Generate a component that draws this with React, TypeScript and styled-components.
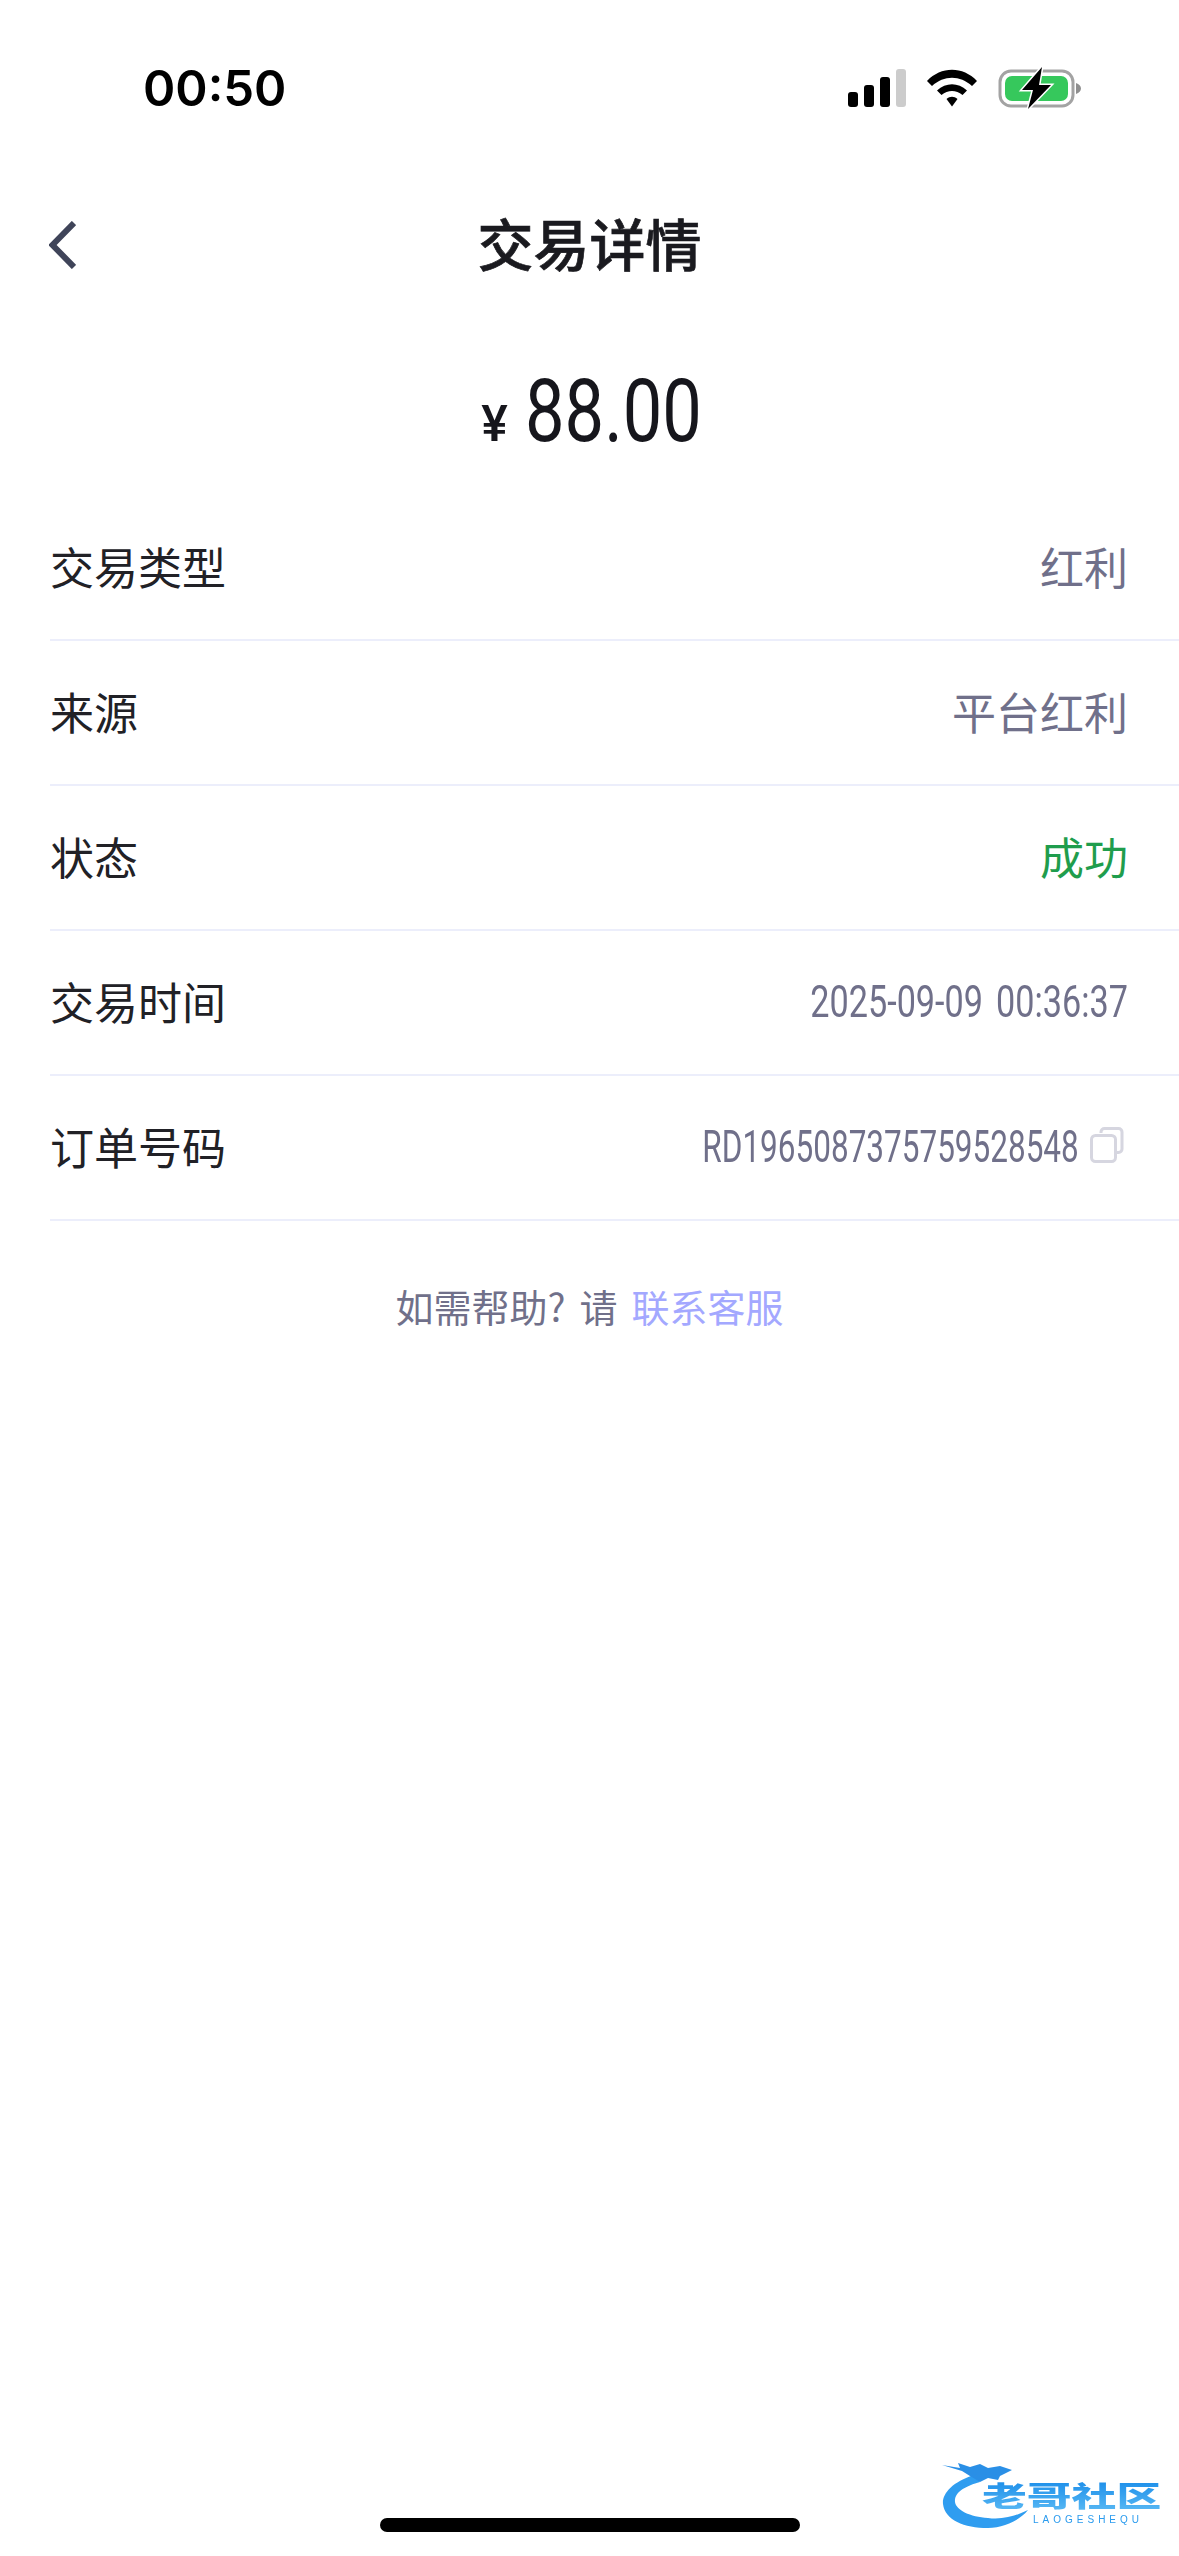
import styled, { createGlobalStyle } from "styled-components";

const CJK = `"Noto Sans CJK SC", "Noto Sans", sans-serif`;
const DIGITS = `"Roboto", "Liberation Sans", sans-serif`;

type Row = {
  label: string;
  value: string;
  tone?: string;
  // horizontal squeeze for the DIN-style digit strings
  squeeze?: number;
  wordGap?: number;
  copy?: boolean;
};

const rows: Row[] = [
  { label: "交易类型", value: "红利" },
  { label: "来源", value: "平台红利" },
  { label: "状态", value: "成功", tone: "success" },
  { label: "交易时间", value: "2025-09-09 00:36:37", squeeze: 0.76, wordGap: 6 },
  { label: "订单号码", value: "RD1965087375759528548", squeeze: 0.7, copy: true },
];

function App() {
  return (
    <Page>
      <GlobalStyle />
      <StatusBar>
        <Clock>00:50</Clock>
        <StatusIcons>
          <IconSlot width="58" height="38" viewBox="0 0 58 38">
            <rect x="0" y="23" width="10" height="15" rx="3" fill="#000" />
            <rect x="16" y="16" width="10" height="22" rx="3" fill="#000" />
            <rect x="32" y="8" width="10" height="30" rx="3" fill="#000" />
            <rect x="48" y="0" width="10" height="38" rx="3" fill="#ccc" />
          </IconSlot>
          <IconSlot width="52" height="38" viewBox="0 0 52 38">
            <path d="M1 12 C15 -3 37 -3 51 12 L46 17 C34 6 18 6 6 17 Z" fill="#000" />
            <path d="M11 21.5 C20 13 32 13 41 21.5 L36.5 26 C30 20.5 22 20.5 15.5 26 Z" fill="#000" />
            <path d="M20.5 30 C24 27 28 27 31.5 30 L26 37.5 Z" fill="#000" />
          </IconSlot>
          <IconSlot width="84" height="42" viewBox="0 0 84 42">
            <rect x="2" y="4" width="73" height="35" rx="11" fill="none" stroke="#a3a3a3" strokeWidth="3" />
            <rect x="7" y="9" width="63" height="25" rx="7" fill="#36c85c" />
            <path d="M78 16 C81 17 83 19 83 21.5 C83 24 81 26 78 27 Z" fill="#8f8f8f" />
            <path d="M44 0 L24 23 H35 L30 42 L53 18 H41 Z" fill="#000" stroke="#fff" strokeWidth="3" paintOrder="stroke" />
          </IconSlot>
        </StatusIcons>
      </StatusBar>

      <NavBar>
        <BackIcon width="27" height="48" viewBox="0 0 27 48">
          <path d="M25 2 L3.5 24 L25 46" fill="none" stroke="#3f4459" strokeWidth="6" />
        </BackIcon>
        <Title>交易详情</Title>
      </NavBar>

      <Amount>
        <Currency>¥</Currency>
        <AmountValue>88.00</AmountValue>
      </Amount>

      <DetailList>
        {rows.map((row) => (
          <DetailRow key={row.label}>
            <Label>{row.label}</Label>
            <ValueGroup>
              <Value $tone={row.tone} $squeeze={row.squeeze} $wordGap={row.wordGap}>
                {row.value}
              </Value>
              {row.copy && (
                <CopyIcon width="34" height="36" viewBox="0 0 34 36">
                  <path
                    d="M11 6 V5 C11 3 12.5 1.5 14.5 1.5 H28.5 C30.5 1.5 32 3 32 5 V22 C32 24 30.5 25.5 28.5 25.5 H27"
                    fill="none"
                    stroke="#d6d6e0"
                    strokeWidth="3"
                  />
                  <rect x="1.5" y="8.5" width="24" height="26" rx="4" fill="none" stroke="#d6d6e0" strokeWidth="3" />
                </CopyIcon>
              )}
            </ValueGroup>
          </DetailRow>
        ))}
      </DetailList>

      <HelpLine>
        如需帮助? 请 <HelpLink>联系客服</HelpLink>
      </HelpLine>

      <HomeIndicator />

      <Watermark>
        <svg width="100" height="72" viewBox="0 0 100 72">
          <path
            d="M34 15 C12 22 2 34 3 44 C5 60 24 68 48 68 C64 68 80 60 88 50 C76 56 62 60 48 58 C30 57 16 50 15 42 C14 32 26 26 40 22 Z"
            fill="#2f9df0"
          />
          <path
            d="M2 5 L20 8 L18 3 L30 7 L40 4 L48 8 L60 6 L72 10 L60 16 L58 20 L48 18 L40 22 L30 16 L22 11 Z"
            fill="#2a8fe6"
          />
        </svg>
        <WatermarkText>
          <WatermarkTitle>老哥社区</WatermarkTitle>
          <WatermarkSub>LAOGESHEQU</WatermarkSub>
        </WatermarkText>
      </Watermark>
    </Page>
  );
}

const GlobalStyle = createGlobalStyle`
  body {
    margin: 0;
    background: #fff;
  }
`;

const Page = styled.div`
  position: relative;
  width: 1179px;
  height: 2556px;
  overflow: hidden;
  background: #fff;
  font-family: ${CJK};
`;

const StatusBar = styled.div`
  display: flex;
  align-items: center;
  justify-content: space-between;
  height: 176px;
  box-sizing: border-box;
  padding: 0 97px 0 143px;
`;

const Clock = styled.div`
  font-family: "Inter", sans-serif;
  font-size: 49px;
  font-weight: 600;
  color: #000;
`;

const StatusIcons = styled.div`
  display: flex;
  align-items: center;
  gap: 20px;
`;

const IconSlot = styled.svg`
  display: block;
`;

const NavBar = styled.div`
  position: relative;
  display: flex;
  align-items: center;
  justify-content: center;
  height: 138px;
  padding-bottom: 8px;
  box-sizing: border-box;
`;

const BackIcon = styled.svg`
  position: absolute;
  left: 49px;
  top: 45px;
`;

const Title = styled.h1`
  margin: 0;
  font-size: 56px;
  font-weight: 500;
  -webkit-text-stroke: 0.7px #1a1a1f;
  color: #1a1a1f;
`;

const Amount = styled.div`
  display: flex;
  align-items: baseline;
  justify-content: center;
  gap: 17px;
  height: 182px;
  padding: 12px 0 0 5px;
  box-sizing: border-box;
  font-family: ${DIGITS};
  color: #16161c;
`;

const Currency = styled.span`
  font-size: 50px;
  font-weight: 500;
`;

const AmountValue = styled.span`
  display: inline-block;
  margin-right: -43px;
  font-size: 88px;
  line-height: 170px;
  transform: scaleX(0.8);
  transform-origin: left center;
`;

const DetailList = styled.div`
  margin-left: 50px;
`;

const DetailRow = styled.div`
  display: flex;
  align-items: center;
  justify-content: space-between;
  height: 145px;
  box-sizing: border-box;
  padding: 0 51px 3px 0;
  border-bottom: 2px solid #eceefb;
`;

const Label = styled.div`
  font-size: 44px;
  color: #212126;
`;

const ValueGroup = styled.div`
  display: flex;
  align-items: center;
  gap: 11px;
`;

const Value = styled.div<{ $tone?: string; $squeeze?: number; $wordGap?: number }>`
  font-family: ${(p) => (p.$squeeze ? DIGITS : CJK)};
  font-size: ${(p) => (p.$squeeze ? "45px" : "44px")};
  word-spacing: ${(p) => p.$wordGap ?? 0}px;
  transform: scaleX(${(p) => p.$squeeze ?? 1});
  transform-origin: right center;
  color: ${(p) => (p.$tone === "success" ? "#1f9d4d" : "#70708a")};
`;

const CopyIcon = styled.svg`
  display: block;
  margin: -2px 4px 0 0;
`;

const HelpLine = styled.div`
  margin-top: 57px;
  text-align: center;
  font-size: 38px;
  word-spacing: 5.5px;
  color: #70708a;
`;

const HelpLink = styled.span`
  color: #a3a8ff;
`;

const HomeIndicator = styled.div`
  position: absolute;
  left: 380px;
  bottom: 24px;
  width: 420px;
  height: 14px;
  border-radius: 7px;
  background: #000;
`;

const Watermark = styled.div`
  position: absolute;
  left: 940px;
  top: 2460px;
  display: flex;
  filter: blur(0.5px);
`;

const WatermarkText = styled.div`
  margin-left: -58px;
  padding-top: 15px;
`;

const WatermarkTitle = styled.div`
  font-size: 28px;
  font-weight: 900;
  white-space: nowrap;
  transform: scaleX(1.6);
  transform-origin: left center;
  background: linear-gradient(#1287e8, #5fbdf5);
  background-clip: text;
  -webkit-background-clip: text;
  color: transparent;
`;

const WatermarkSub = styled.div`
  margin-left: 51px;
  font-family: "Liberation Sans", sans-serif;
  font-size: 10px;
  line-height: 10px;
  letter-spacing: 4px;
  white-space: nowrap;
  color: #2a9bee;
`;

export default App;
